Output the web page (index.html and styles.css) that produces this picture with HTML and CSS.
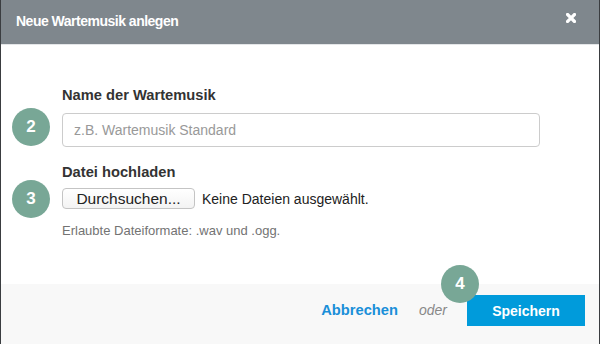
FILE: index.html
```html
<!DOCTYPE html>
<html lang="de">
<head>
    <meta charset="UTF-8">
    <meta name="viewport" content="width=device-width, initial-scale=1.0">
    <title>Neue Wartemusik anlegen</title>
    <link rel="stylesheet" href="styles.css">
</head>
<body>
    <div class="modal">
        <div class="modal-header">
            <h3>Neue Wartemusik anlegen</h3>
            <button class="close" type="button" aria-label="Schließen">
                <svg width="10" height="10" viewBox="0 0 10 10">
                    <path d="M1.5 1.5 L8.5 8.5 M8.5 1.5 L1.5 8.5" stroke="#fff" stroke-width="3.2" stroke-linecap="square"/>
                </svg>
            </button>
        </div>
        <form class="modal-body" id="musicForm">
            <div class="form-group">
                <span class="step step-name">2</span>
                <label for="musicName">Name der Wartemusik</label>
                <input type="text" id="musicName" name="musicName" placeholder="z.B. Wartemusik Standard">
            </div>
            <div class="form-group">
                <span class="step step-file">3</span>
                <label>Datei hochladen</label>
                <div class="file-row">
                    <button type="button" class="file-button">Durchsuchen...</button>
                    <span class="file-name">Keine Dateien ausgewählt.</span>
                </div>
                <p class="help">Erlaubte Dateiformate: .wav und .ogg.</p>
            </div>
        </form>
        <div class="modal-footer">
            <a href="#" class="cancel">Abbrechen</a>
            <span class="or">oder</span>
            <span class="step step-save">4</span>
            <button type="submit" form="musicForm" class="save">Speichern</button>
        </div>
    </div>
</body>
</html>
```

FILE: styles.css
```css
html, body {
    margin: 0;
    height: 100%;
}
body {
    font-family: "Liberation Sans", Arial, sans-serif;
    background-color: #3a3d40;
    color: #333;
    padding: 0 1px;
    box-sizing: border-box;
}
.modal {
    background-color: #fff;
    height: 100%;
    display: flex;
    flex-direction: column;
}
.modal-header {
    background-color: #7f878d;
    height: 44px;
    border-bottom: 1px solid #e4e6e8;
    display: flex;
    align-items: center;
    justify-content: space-between;
    padding: 0 23px 0 15px;
}
.modal-header h3 {
    margin: 0;
    color: #fff;
    font-size: 14px;
    letter-spacing: -0.5px;
    font-weight: bold;
    margin-top: -3px;
}
.close {
    background: none;
    border: none;
    padding: 0;
    display: flex;
    margin-top: -8px;
    cursor: pointer;
}
.modal-body {
    flex: 1;
    padding: 40px 59px 0 61px;
}
.form-group {
    position: relative;
}
.form-group + .form-group {
    margin-top: 15px;
}
label {
    display: block;
    font-size: 14.7px;
    font-weight: bold;
    line-height: 20px;
    margin-bottom: 8px;
    color: #333;
}
.form-group + .form-group label {
    margin-bottom: 6px;
}
input[type="text"] {
    width: 100%;
    height: 34px;
    box-sizing: border-box;
    border: 1px solid #ccc;
    border-radius: 4px;
    padding: 0 11px;
    font-family: inherit;
    font-size: 14px;
    color: #555;
}
input::placeholder {
    color: #999;
}
.file-row {
    display: flex;
    align-items: center;
    gap: 7px;
}
.file-button {
    width: 133px;
    height: 21px;
    padding: 0;
    font-family: inherit;
    font-size: 15.5px;
    color: #222;
    background: linear-gradient(#fff, #f3f3f3);
    border: 1px solid #c4c4c4;
    border-radius: 4px;
}
.file-name {
    font-size: 14px;
    color: #222;
}
.help {
    margin: 13px 0 0;
    font-size: 13px;
    line-height: 17px;
    color: #737373;
}
.step {
    position: absolute;
    width: 38px;
    height: 38px;
    border-radius: 50%;
    background-color: #78a796;
    color: #fff;
    font-size: 17px;
    font-weight: bold;
    display: flex;
    align-items: center;
    justify-content: center;
}
.step-name {
    left: -50px;
    top: 23px;
}
.step-file {
    left: -50px;
    top: 18px;
}
.modal-footer {
    position: relative;
    background-color: #f8f8f8;
    height: 60px;
    display: flex;
    align-items: flex-start;
    justify-content: flex-end;
    padding: 11px 14px 0 0;
    box-sizing: border-box;
}
.cancel {
    color: #1a8fd8;
    font-weight: bold;
    font-size: 14.7px;
    text-decoration: none;
    line-height: 31px;
}
.or {
    color: #888;
    font-style: italic;
    font-size: 14px;
    line-height: 31px;
    margin: 0 20px 0 21px;
}
.step-save {
    left: 440px;
    top: -19px;
}
.save {
    width: 118px;
    height: 31px;
    background-color: #009bdb;
    color: #fff;
    border: none;
    font-family: inherit;
    font-size: 14px;
    font-weight: bold;
    cursor: pointer;
}
```
